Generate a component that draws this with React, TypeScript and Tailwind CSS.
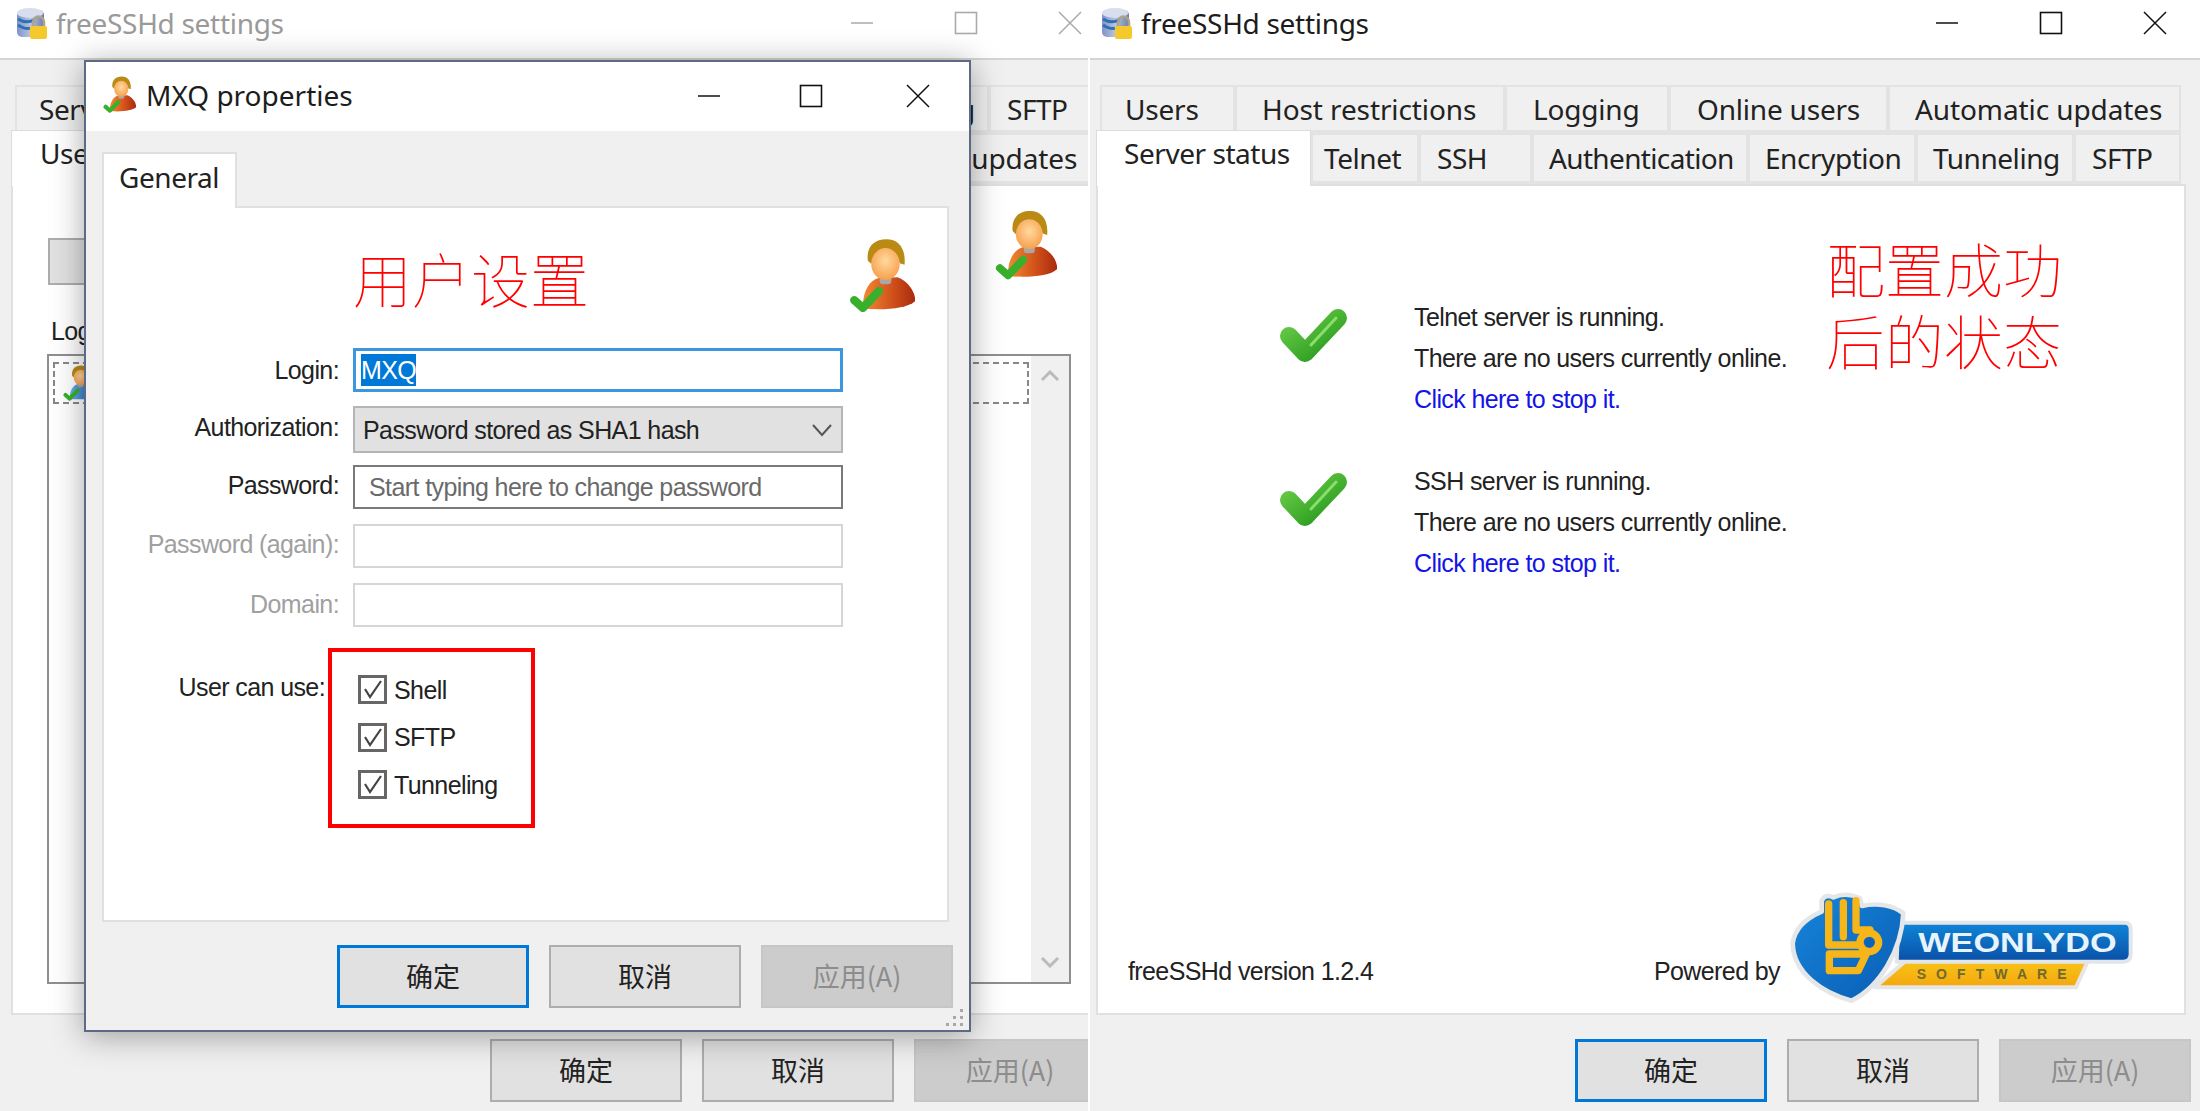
const tabFont = "font-['Noto_Sans',sans-serif] text-[28px] text-[#222] tracking-[-0.45px]";
const bodyFont = "font-['Liberation_Sans',sans-serif] text-[25px] text-[#222] tracking-[-0.6px]";
const cjk = "font-['Noto_Sans_CJK_SC',sans-serif]";

function UserIcon({ w, h, shirt = "r" }: { w: number; h: number; shirt?: string }) {
  const blue = shirt === "b";
  return (
    <svg width={w} height={h} viewBox="0 0 190 210" className="shrink-0">
      <defs>
        <radialGradient id="uface" cx="50%" cy="40%" r="60%">
          <stop offset="0%" stopColor="#ffd9a0" />
          <stop offset="100%" stopColor="#f7a04c" />
        </radialGradient>
        <linearGradient id="ubody" x1="0" y1="0" x2="1" y2="0">
          <stop offset="0%" stopColor="#f08a32" />
          <stop offset="55%" stopColor="#d2521c" />
          <stop offset="100%" stopColor="#a82a0c" />
        </linearGradient>
        <linearGradient id="ublue" x1="0" y1="0" x2="1" y2="0">
          <stop offset="0%" stopColor="#6db3ee" />
          <stop offset="100%" stopColor="#1c62b8" />
        </linearGradient>
      </defs>
      <path d="M40 200 C38 150 60 118 85 112 L140 110 C170 122 190 150 191 178 C170 200 100 206 40 200Z" fill={blue ? "url(#ublue)" : "url(#ubody)"} />
      <rect x="88" y="104" width="34" height="26" rx="10" fill="#a8a8a8" />
      <path d="M54 62 C50 22 72 1 108 1 C142 1 164 26 160 74 L146 70 C140 40 70 40 64 72Z" fill="#b98a14" />
      <ellipse cx="105" cy="72" rx="41" ry="46" fill="url(#uface)" />
      <path d="M15 176 L40 198 L86 150" fill="none" stroke="#39b02c" strokeWidth="24" strokeLinecap="round" strokeLinejoin="round" />
    </svg>
  );
}

function DbIcon() {
  return (
    <svg width="32" height="33" viewBox="0 0 32 33" className="shrink-0">
      <defs>
        <linearGradient id="dbg" x1="0" y1="0" x2="1" y2="0">
          <stop offset="0%" stopColor="#7f93c8" />
          <stop offset="50%" stopColor="#b9c4de" />
          <stop offset="100%" stopColor="#6f7ca8" />
        </linearGradient>
      </defs>
      <rect x="1" y="3" width="27" height="27" rx="5" fill="url(#dbg)" />
      <ellipse cx="14" cy="6" rx="13" ry="5" fill="#d8deee" />
      <path d="M2 12 Q10 17 18 13 M2 18 Q10 23 14 21" stroke="#2f6fb8" strokeWidth="3" fill="none" />
      <path d="M17 20 V15 a5.5 5.5 0 0 1 11 0 V20" fill="none" stroke="#a9a48a" strokeWidth="2.5" />
      <rect x="14" y="19" width="17" height="13" rx="2" fill="#f4c92c" />
    </svg>
  );
}

function Check() {
  return (
    <svg width="72" height="58" viewBox="0 0 72 58" className="shrink-0">
      <defs>
        <linearGradient id="chk" x1="0" y1="0" x2="1" y2="1">
          <stop offset="0%" stopColor="#6ccc48" />
          <stop offset="100%" stopColor="#23981c" />
        </linearGradient>
      </defs>
      <path d="M11 29 L27 46 L60 11" fill="none" stroke="url(#chk)" strokeWidth="18" strokeLinecap="round" strokeLinejoin="round" />
      <path d="M33 38 L58 11" fill="none" stroke="#8ade6a" strokeWidth="3" strokeLinecap="round" />
    </svg>
  );
}

function Logo() {
  return (
    <svg width="380" height="130" viewBox="0 0 1140 390" className="shrink-0">
      <defs>
        <linearGradient id="lgb" x1="0" y1="0" x2="0" y2="1">
          <stop offset="0%" stopColor="#0f86d8" />
          <stop offset="100%" stopColor="#0a4fa6" />
        </linearGradient>
        <linearGradient id="lgs" x1="0" y1="0" x2="1" y2="1">
          <stop offset="0%" stopColor="#1686da" />
          <stop offset="100%" stopColor="#0a5cb4" />
        </linearGradient>
        <linearGradient id="lgy" x1="0" y1="0" x2="0" y2="1">
          <stop offset="0%" stopColor="#f8c518" />
          <stop offset="100%" stopColor="#f4a60e" />
        </linearGradient>
      </defs>
      <path d="M285 322 L380 240 L925 240 L888 322Z" fill="url(#lgy)" stroke="#e6e6e6" strokeWidth="12" strokeLinejoin="round" />
      <path d="M355 128 H1035 Q1052 128 1052 148 V222 Q1052 245 1030 245 H350Z" fill="url(#lgb)" stroke="#e2e6ea" strokeWidth="12" strokeLinejoin="round" />
      <text x="415" y="216" fontFamily="'Liberation Sans',sans-serif" fontWeight="700" fontSize="84" fill="#e8f4fc" textLength="595" lengthAdjust="spacingAndGlyphs">WEONLYDO</text>
      <text x="410" y="296" fontFamily="'Liberation Sans',sans-serif" fontWeight="700" fontSize="42" fill="#6e6a30" textLength="450">SOFTWARE</text>
      <path d="M38 190 C45 140 90 110 125 95 L125 62 Q135 40 160 52 Q200 35 240 55 L246 78 C290 68 340 75 370 100 C365 210 300 320 215 362 C130 340 40 280 38 190Z" fill="url(#lgs)" stroke="#e4e6e8" strokeWidth="14" strokeLinejoin="round" />
      <g fill="none" stroke="#f6b518" strokeWidth="22" strokeLinecap="round" strokeLinejoin="round">
        <path d="M146 72 V195 H240" />
        <path d="M190 68 V170" />
        <path d="M228 62 V150 L270 150" />
        <circle cx="268" cy="187" r="28" />
        <path d="M148 222 H240 L262 215 M148 222 V272 H235 L262 215" />
      </g>
      <circle cx="268" cy="187" r="14" fill="#0a62ba" />
    </svg>
  );
}

function Min({ dim }: { dim?: boolean }) {
  return (
    <svg width="24" height="24" viewBox="0 0 24 24" className="shrink-0">
      <path d="M1 12 H23" stroke={dim ? "#aaa" : "#111"} strokeWidth="1.5" />
    </svg>
  );
}
function Max({ dim }: { dim?: boolean }) {
  return (
    <svg width="24" height="24" viewBox="0 0 24 24" className="shrink-0">
      <rect x="1.5" y="1.5" width="21" height="21" fill="none" stroke={dim ? "#aaa" : "#111"} strokeWidth="1.6" />
    </svg>
  );
}
function Close({ dim }: { dim?: boolean }) {
  return (
    <svg width="24" height="24" viewBox="0 0 24 24" className="shrink-0">
      <path d="M1 1 L23 23 M23 1 L1 23" stroke={dim ? "#aaa" : "#111"} strokeWidth="1.5" />
    </svg>
  );
}

function Btn({ label, kind }: { label: string; kind: "ok" | "normal" | "off" | "plain" }) {
  const cls =
    kind === "ok"
      ? "border-[3px] border-[#0078d7] bg-[#e1e1e1] text-[#222]"
      : kind === "off"
        ? "border-2 border-[#c6c6c6] bg-[#cccccc] text-[#8d8d8d]"
        : "border-2 border-[#adadad] bg-[#e1e1e1] text-[#222]";
  return (
    <div className={`flex h-[63px] w-[192px] shrink-0 items-center justify-center text-[27px] ${cjk} ${cls}`}>{label}</div>
  );
}

type T = { label: string; cls: string; activeCls?: string };

const serverRow: T[] = [
  { label: "Server status", cls: "w-[211px] pl-[22px]", activeCls: "w-[215px] pl-[27px]" },
  { label: "Telnet", cls: "w-[108px] pl-[11px]" },
  { label: "SSH", cls: "w-[113px] pl-[16px]" },
  { label: "Authentication", cls: "w-[216px] pl-[15px] !tracking-[-0.65px]" },
  { label: "Encryption", cls: "w-[168px] pl-[15px]" },
  { label: "Tunneling", cls: "w-[158px] pl-[15px]" },
  { label: "SFTP", cls: "w-[107px] pl-[16px]" },
];
const userRow: T[] = [
  { label: "Users", cls: "w-[135px] pl-[23px] !tracking-[-0.2px]", activeCls: "w-[139px] pl-[28px]" },
  { label: "Host restrictions", cls: "w-[270px] pl-[25px] !tracking-[-0.1px]" },
  { label: "Logging", cls: "w-[164px] pl-[26px] !tracking-[-0.2px]" },
  { label: "Online users", cls: "w-[219px] pl-[26px] !tracking-[-0.2px]" },
  { label: "Automatic updates", cls: "w-[293px] pl-[25px] !tracking-[-0.1px]" },
];

function Tab({ t, active }: { t: T; active?: boolean }) {
  if (active) {
    return (
      <div className={`relative z-10 -ml-[4px] -mt-[3px] h-[56px] shrink-0 whitespace-nowrap border border-b-0 border-[#dcdcdc] bg-white pt-[3px] leading-[38px] ${tabFont} ${t.activeCls}`}>
        {t.label}
      </div>
    );
  }
  return (
    <div className={`flex h-full shrink-0 items-center whitespace-nowrap border-2 border-b-[3px] border-l-[2px] border-[#e3e3e3] bg-[#f0f0f0] ${tabFont} ${t.cls}`}>
      {t.label}
    </div>
  );
}

function Window({
  width,
  left,
  dim,
  top,
  bottom,
  children,
}: {
  width: string;
  left: string;
  dim?: boolean;
  top: T[];
  bottom: T[];
  children: React.ReactNode;
}) {
  return (
    <div className={`flex h-full shrink-0 flex-col overflow-hidden bg-[#f0f0f0] ${width}`}>
      <div className={`flex h-[60px] shrink-0 items-center justify-between border-b-2 border-[#d4d4d4] bg-white pb-[12px] ${dim ? "pl-[16px] pr-[6px]" : "pl-[11px] pr-[33px]"}`}>
        <div className="flex items-center gap-[8px]">
          <DbIcon />
          <span className={`font-['Noto_Sans',sans-serif] text-[28px] tracking-[-0.3px] ${dim ? "text-[#9a9a9a]" : "text-[#1c1c1c]"}`}>freeSSHd settings</span>
        </div>
        <div className="flex items-center gap-[80px]">
          <Min dim={dim} />
          <Max dim={dim} />
          <Close dim={dim} />
        </div>
      </div>
      <div className={`flex w-[1090px] flex-col pt-[25px] ${left}`}>
        <div className="ml-[4px] flex h-[48px]">
          {top.map((t) => (
            <Tab key={t.label} t={t} />
          ))}
        </div>
        <div className="ml-[4px] flex h-[51px]">
          {bottom.map((t, i) => (
            <Tab key={t.label} t={t} active={i === 0} />
          ))}
        </div>
        <div className="relative flex h-[831px] w-[1090px] flex-col border-2 border-[#e0e0e0] bg-white">{children}</div>
      </div>
      <div className={`mt-[24px] flex gap-[20px] ${dim ? "pl-[490px]" : "justify-end pr-[9px]"}`}>
        <Btn label="确定" kind={dim ? "normal" : "ok"} />
        <Btn label="取消" kind="normal" />
        <Btn label="应用(A)" kind="off" />
      </div>
    </div>
  );
}

function StatusBlock({ name, mt }: { name: string; mt: string }) {
  return (
    <div className={`flex pl-[180px] ${mt}`}>
      <div className="flex w-[136px] shrink-0 items-start pt-[10px]">
        <Check />
      </div>
      <div className={`flex flex-col leading-[41px] ${bodyFont}`}>
        <span>{name} server is running.</span>
        <span>There are no users currently online.</span>
        <span className="text-[#1414e6]">Click here to stop it.</span>
      </div>
    </div>
  );
}

function Field({ label, dim, children, mt, lift }: { label: string; dim?: boolean; children: React.ReactNode; mt: string; lift?: string }) {
  return (
    <div className={`flex items-center ${mt}`}>
      <div className={`w-[235px] shrink-0 text-right ${bodyFont} ${dim ? "text-[#a0a0a0]" : ""} ${lift ?? ""}`}>{label}</div>
      <div className="ml-[14px] w-[490px] shrink-0">{children}</div>
    </div>
  );
}

function CheckRow({ label }: { label: string }) {
  return (
    <div className="flex h-[29px] items-center gap-[7px]">
      <svg width="29" height="29" viewBox="0 0 29 29" className="shrink-0">
        <rect x="1.5" y="1.5" width="26" height="26" fill="#fff" stroke="#666" strokeWidth="3" />
        <path d="M7 14 L12 22 L23 6" fill="none" stroke="#444" strokeWidth="2.2" />
      </svg>
      <span className={`pt-[2px] ${bodyFont}`}>{label}</span>
    </div>
  );
}

function Dialog() {
  return (
    <div className="absolute left-[84px] top-[60px] z-20 flex h-[972px] w-[887px] flex-col border-2 border-[#5d6a86] bg-[#f0f0f0] shadow-[0_4px_30px_rgba(0,0,0,0.35)]">
      <div className="flex h-[69px] shrink-0 items-center justify-between bg-white pl-[17px] pr-[39px]">
        <div className="flex items-center gap-[10px] pb-[4px]">
          <UserIcon w={33} h={37} />
          <span className="font-['Noto_Sans',sans-serif] text-[28px] text-[#1c1c1c]">MXQ properties</span>
        </div>
        <div className="flex items-center pb-[1px]">
          <Min />
          <div className="ml-[78px] mr-[83px]">
            <Max />
          </div>
          <Close />
        </div>
      </div>
      <div className="pl-[16px] pt-[21px]">
        <div className={`relative z-10 -mb-[2px] h-[56px] w-[135px] border-2 border-b-0 border-[#e0e0e0] bg-white pl-[15px] pt-[5px] leading-[36px] ${tabFont}`}>General</div>
        <div className="h-[716px] w-[847px] border-2 border-[#e0e0e0] bg-white">
          <div className="flex h-[140px] items-start justify-between pl-[249px] pr-[32px] pt-[31px]">
            <span className={`pt-[4px] text-[59px] font-thin leading-[70px] text-[#ff0000] ${cjk}`}>用户设置</span>
            <UserIcon w={66} h={73} />
          </div>
          <Field label="Login:" mt="mt-0" lift="pt-[1px]">
            <div className="flex h-[44px] items-center border-[3px] border-[#3c96e0] pl-[5px]">
              <span className={`bg-[#0078d7] leading-[32px] ${bodyFont} !text-white`}>MXQ</span>
            </div>
          </Field>
          <Field label="Authorization:" mt="mt-[14px]" lift="pb-[3px]">
            <div className={`flex h-[47px] items-center justify-between border-2 border-[#b5b5b5] bg-[#e1e1e1] pl-[8px] pr-[8px] ${bodyFont}`}>
              <span className="pt-[3px]">Password stored as SHA1 hash</span>
              <svg width="22" height="14" viewBox="0 0 22 14">
                <path d="M2 2 L11 12 L20 2" fill="none" stroke="#555" strokeWidth="2" />
              </svg>
            </div>
          </Field>
          <Field label="Password:" mt="mt-[12px]" lift="pb-[2px]">
            <div className={`flex h-[44px] items-center border-2 border-[#7a7a7a] pl-[14px] pt-[2px] ${bodyFont} !text-[#6a6a6a]`}>Start typing here to change password</div>
          </Field>
          <Field label="Password (again):" dim mt="mt-[15px]" lift="pb-[2px]">
            <div className="h-[44px] border-2 border-[#d6d6d6]" />
          </Field>
          <Field label="Domain:" dim mt="mt-[15px]">
            <div className="h-[44px] border-2 border-[#d6d6d6]" />
          </Field>
          <div className="mt-[21px] flex items-start">
            <div className={`mt-[21px] w-[221px] shrink-0 text-right ${bodyFont}`}>User can use:</div>
            <div className="ml-[3px] flex h-[180px] w-[207px] flex-col gap-[18.5px] border-4 border-[#ff0000] pl-[26px] pt-[23px]">
              <CheckRow label="Shell" />
              <CheckRow label="SFTP" />
              <CheckRow label="Tunneling" />
            </div>
          </div>
        </div>
        <div className="mt-[23px] flex justify-end gap-[20px] pr-[16px]">
          <Btn label="确定" kind="ok" />
          <Btn label="取消" kind="normal" />
          <Btn label="应用(A)" kind="off" />
        </div>
      </div>
      <svg width="20" height="20" viewBox="0 0 20 20" className="absolute bottom-[2px] right-[4px]">
        <g fill="#a8a8a8">
          <rect x="15" y="1" width="3" height="3" />
          <rect x="8" y="8" width="3" height="3" />
          <rect x="15" y="8" width="3" height="3" />
          <rect x="1" y="15" width="3" height="3" />
          <rect x="8" y="15" width="3" height="3" />
          <rect x="15" y="15" width="3" height="3" />
        </g>
      </svg>
    </div>
  );
}

export default function App() {
  return (
    <div className="relative flex h-[1111px] w-[2200px] gap-[2px] overflow-hidden bg-white">
      <Window width="w-[1088px]" left="pl-[11px]" dim top={serverRow} bottom={userRow}>
        <div className="flex items-start justify-between pl-[35px] pr-[42px] pt-[24px]">
          <div className="mt-[28px] h-[47px] w-[100px] border-2 border-[#adadad] bg-[#e1e1e1]" />
          <UserIcon w={62} h={70} />
        </div>
        <div className={`ml-[38px] mt-[28px] ${bodyFont}`}>Login</div>
        <div className="ml-[34px] mt-[3px] flex h-[630px] w-[1024px] border-2 border-[#8f8f8f] pl-[4px]">
          <div className="flex-1 pt-[6px]">
            <div className="flex h-[42px] items-center border-2 border-dashed border-[#888] pl-[8px]">
              <UserIcon w={32} h={36} shirt="b" />
            </div>
          </div>
          <div className="ml-[2px] flex w-[38px] flex-col items-center justify-between bg-[#f0f0f0] py-[14px]">
            <svg width="20" height="12" viewBox="0 0 20 12">
              <path d="M2 10 L10 2 L18 10" fill="none" stroke="#bbb" strokeWidth="3" />
            </svg>
            <svg width="20" height="12" viewBox="0 0 20 12">
              <path d="M2 2 L10 10 L18 2" fill="none" stroke="#bbb" strokeWidth="3" />
            </svg>
          </div>
        </div>
      </Window>
      <Window width="w-[1110px]" left="pl-[6px]" top={userRow} bottom={serverRow}>
        <span className={`absolute left-[728px] top-[46px] w-[240px] text-[59px] font-thin leading-[72px] text-[#ff0000] ${cjk}`}>配置成功后的状态</span>
        <StatusBlock name="Telnet" mt="mt-[111px]" />
        <StatusBlock name="SSH" mt="mt-[41px]" />
        <div className="mt-auto flex items-end justify-between pb-[3px] pl-[30px] pr-[24px]">
          <span className={`mb-[20px] ${bodyFont}`}>freeSSHd version 1.2.4</span>
          <div className="flex items-end">
            <span className={`mb-[20px] ${bodyFont}`}>Powered by</span>
            <Logo />
          </div>
        </div>
      </Window>
      <Dialog />
    </div>
  );
}
